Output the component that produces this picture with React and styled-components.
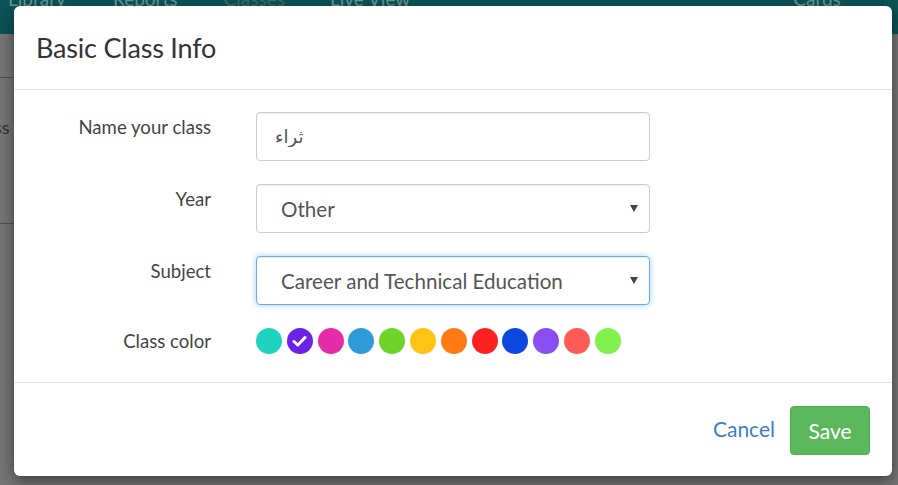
import React from 'react';
import styled, { createGlobalStyle } from 'styled-components';

const GlobalStyle = createGlobalStyle`
  html, body { margin: 0; padding: 0; }
  body {
    font-family: Lato, "Open Sans", "DejaVu Sans", sans-serif;
    background: #767676;
    overflow: hidden;
  }
`;

const Page = styled.div`
  position: relative;
  width: 898px;
  height: 485px;
  overflow: hidden;
  background: #767676;
`;

const TopNav = styled.div`
  height: 34px;
  background: #0b5457;
  display: flex;
  align-items: flex-start;
  padding-left: 8px;
  overflow: hidden;
`;

const NavItem = styled.span`
  font-size: 19px;
  line-height: 20px;
  margin-top: -11px;
  margin-right: ${p => p.gap}px;
  color: ${p => (p.active ? '#3f6e70' : '#6a9698')};
  white-space: nowrap;
`;

const SidePanel = styled.div`
  width: 14px;
  padding-top: 43px;
`;

const PanelRule = styled.div`
  height: 1px;
  background: #505050;
  margin-bottom: ${p => p.after}px;
`;

const PanelText = styled.div`
  font-size: 18px;
  line-height: 18px;
  color: #2e2e2e;
  margin-left: -6px;
  margin-bottom: 87px;
`;

const Overlay = styled.div`
  position: absolute;
  inset: 0;
  padding: 6px 6px 9px 14px;
`;

const Modal = styled.div`
  width: 878px;
  height: 470px;
  background: #fff;
  border-radius: 6px;
  box-shadow: 0 5px 15px rgba(0, 0, 0, 0.5);
  display: flex;
  flex-direction: column;
`;

const Header = styled.div`
  height: 83px;
  border-bottom: 1px solid #e5e5e5;
  display: flex;
  align-items: center;
  padding-left: 22px;
`;

const Title = styled.h4`
  margin: 0;
  font-size: 27px;
  font-weight: 400;
  color: #333;
  letter-spacing: -0.2px;
`;

const Body = styled.div`
  flex: 1;
  padding-top: 22px;
  display: grid;
  grid-template-columns: 197px 394px;
  column-gap: 45px;
  row-gap: 23px;
  align-content: start;
`;

const Label = styled.label`
  text-align: right;
  font-size: 18.6px;
  line-height: 24px;
  color: #444;
  padding-top: ${p => (p.center ? 0 : 3)}px;
  align-self: ${p => (p.center ? 'center' : 'start')};
`;

const TextInput = styled.input`
  box-sizing: border-box;
  height: 49px;
  width: 100%;
  border: 1px solid #ccc;
  border-radius: 4px;
  padding: 0 18px;
  font-family: Tahoma, "DejaVu Sans", sans-serif;
  font-size: 18px;
  color: #555;
  outline: none;
  box-shadow: inset 0 1px 1px rgba(0, 0, 0, 0.05);
`;

const SelectBox = styled.div`
  position: relative;
  height: 49px;
`;

const Select = styled.select`
  box-sizing: border-box;
  appearance: none;
  -webkit-appearance: none;
  width: 100%;
  height: 49px;
  background: #fff;
  border: 1px solid ${p => (p.focused ? '#66afe9' : '#ccc')};
  border-radius: 4px;
  padding: 0 24px;
  font-family: Lato, sans-serif;
  font-size: 20.6px;
  color: #555;
  outline: none;
  box-shadow: ${p =>
    p.focused
      ? 'inset 0 1px 1px rgba(0,0,0,.075), 0 0 6px rgba(102,175,233,.6)'
      : 'inset 0 1px 1px rgba(0,0,0,.05)'};
`;

const Caret = styled.span`
  position: absolute;
  right: 12px;
  top: 21px;
  width: 0;
  height: 0;
  border-left: 4px solid transparent;
  border-right: 4px solid transparent;
  border-top: 7px solid #444;
  pointer-events: none;
`;

const Swatches = styled.div`
  display: flex;
  gap: 4.8px;
  height: 26px;
  align-self: center;
`;

const Swatch = styled.span`
  width: 26px;
  height: 26px;
  border-radius: 50%;
  background: ${p => p.color};
  display: flex;
  align-items: center;
  justify-content: center;
`;

const Footer = styled.div`
  height: 93px;
  border-top: 1px solid #e5e5e5;
  display: flex;
  justify-content: flex-end;
  align-items: center;
  gap: 15px;
  padding-right: 22px;
`;

const CancelLink = styled.a`
  font-size: 21px;
  color: #3f7fc0;
  text-decoration: none;
  margin-top: -2px;
`;

const SaveButton = styled.button`
  width: 80px;
  height: 49px;
  border: 1px solid #4cae4c;
  border-radius: 4px;
  background: #5cb85c;
  color: #fff;
  font-family: Lato, sans-serif;
  font-size: 21px;
  margin-top: 1px;
`;

const colors = [
  '#1fd4bf', '#6b22e6', '#e52ba7', '#2c9bd8', '#6fd42a', '#ffc313',
  '#ff7a15', '#ff2121', '#0a48e0', '#8a4ef0', '#ff5b56', '#82f14c',
];

export default function App() {
  return (
    <Page>
      <GlobalStyle />
      <TopNav>
        <NavItem gap={47}>Library</NavItem>
        <NavItem gap={46}>Reports</NavItem>
        <NavItem gap={45} active>Classes</NavItem>
        <NavItem gap={383}>Live View</NavItem>
        <NavItem gap={0}>Cards</NavItem>
      </TopNav>
      <SidePanel>
        <PanelRule after={40} />
        <PanelText>ss</PanelText>
        <PanelRule after={0} />
      </SidePanel>
      <Overlay>
        <Modal>
          <Header>
            <Title>Basic Class Info</Title>
          </Header>
          <Body>
            <Label>Name your class</Label>
            <TextInput defaultValue="ثراء" dir="ltr" />
            <Label>Year</Label>
            <SelectBox>
              <Select defaultValue="other">
                <option value="other">Other</option>
              </Select>
              <Caret />
            </SelectBox>
            <Label>Subject</Label>
            <SelectBox>
              <Select focused defaultValue="cte">
                <option value="cte">Career and Technical Education</option>
              </Select>
              <Caret />
            </SelectBox>
            <Label center>Class color</Label>
            <Swatches>
              {colors.map((c, i) => (
                <Swatch key={c} color={c}>
                  {i === 1 && (
                    <svg width="15" height="12" viewBox="0 0 15 12">
                      <path d="M2 6.5 L5.8 10 L13 2.5" fill="none" stroke="#fff" strokeWidth="3" strokeLinecap="round" strokeLinejoin="round" />
                    </svg>
                  )}
                </Swatch>
              ))}
            </Swatches>
          </Body>
          <Footer>
            <CancelLink href="#">Cancel</CancelLink>
            <SaveButton>Save</SaveButton>
          </Footer>
        </Modal>
      </Overlay>
    </Page>
  );
}
